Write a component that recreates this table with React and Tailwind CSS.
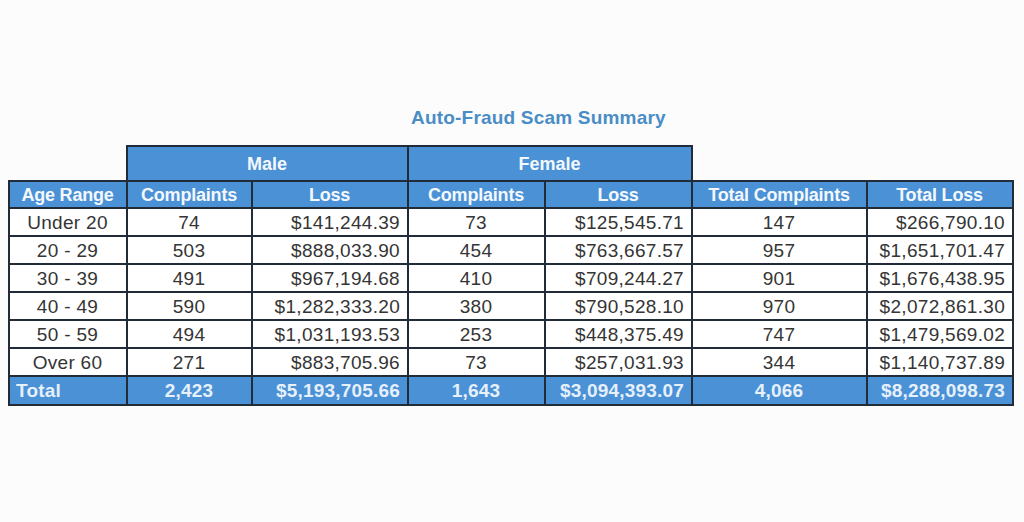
const rows = [
  ["Under 20", "74", "$141,244.39", "73", "$125,545.71", "147", "$266,790.10"],
  ["20 - 29", "503", "$888,033.90", "454", "$763,667.57", "957", "$1,651,701.47"],
  ["30 - 39", "491", "$967,194.68", "410", "$709,244.27", "901", "$1,676,438.95"],
  ["40 - 49", "590", "$1,282,333.20", "380", "$790,528.10", "970", "$2,072,861.30"],
  ["50 - 59", "494", "$1,031,193.53", "253", "$448,375.49", "747", "$1,479,569.02"],
  ["Over 60", "271", "$883,705.96", "73", "$257,031.93", "344", "$1,140,737.89"],
];

const totals = ["Total", "2,423", "$5,193,705.66", "1,643", "$3,094,393.07", "4,066", "$8,288,098.73"];

// money columns are right aligned, counts centered
const align = ["text-center", "text-center", "text-right", "text-center", "text-right", "text-center", "text-right"];

const cell = "border-2 border-[#222c38] pl-[6px] pr-[7px] leading-none";

export default function App() {
  return (
    <div className="min-h-[522px] w-[1024px] bg-[#fcfcfc] pt-[106px] font-['Liberation_Sans',Arial,sans-serif]">
      {/* Title */}
      <h1 className="ml-[411px] text-[19px] font-bold leading-6 tracking-[0.2px] text-[#4a8dc6]">
        Auto-Fraud Scam Summary
      </h1>

      <table className="ml-[8px] mt-[15px] table-fixed border-collapse">
        <colgroup>
          <col className="w-[118px]" />
          <col className="w-[125px]" />
          <col className="w-[156px]" />
          <col className="w-[137px]" />
          <col className="w-[147px]" />
          <col className="w-[175px]" />
          <col className="w-[146px]" />
        </colgroup>
        <thead>
          <tr className="h-[35px]">
            <th className="border-0"></th>
            <th colSpan={2} className={`${cell} bg-[#4b91d6] text-[18px] font-bold text-[#f3f8fd]`}>
              Male
            </th>
            <th colSpan={2} className={`${cell} bg-[#4b91d6] text-[18px] font-bold text-[#f3f8fd]`}>
              Female
            </th>
            <th colSpan={2} className="border-0"></th>
          </tr>
          <tr className="h-[27px]">
            {["Age Range", "Complaints", "Loss", "Complaints", "Loss", "Total Complaints", "Total Loss"].map((h, i) => (
              <th key={i} className={`${cell} bg-[#4b91d6] text-center text-[18px] font-bold tracking-[-0.2px] text-[#f3f8fd]`}>
                {h}
              </th>
            ))}
          </tr>
        </thead>
        <tbody>
          {rows.map((r, ri) => (
            <tr key={ri} className="h-[28px] bg-white">
              {r.map((v, i) => (
                <td key={i} className={`${cell} ${align[i]} text-[19px] tracking-[0.3px] text-[#353535]`}>
                  {v}
                </td>
              ))}
            </tr>
          ))}
          <tr className="h-[29px] bg-[#4b91d6]">
            {totals.map((v, i) => (
              <td
                key={i}
                className={`${cell} ${i === 0 ? "text-left" : align[i]} text-[19px] font-bold tracking-[0.2px] text-[#e6f0fb]`}
              >
                {v}
              </td>
            ))}
          </tr>
        </tbody>
      </table>
    </div>
  );
}
